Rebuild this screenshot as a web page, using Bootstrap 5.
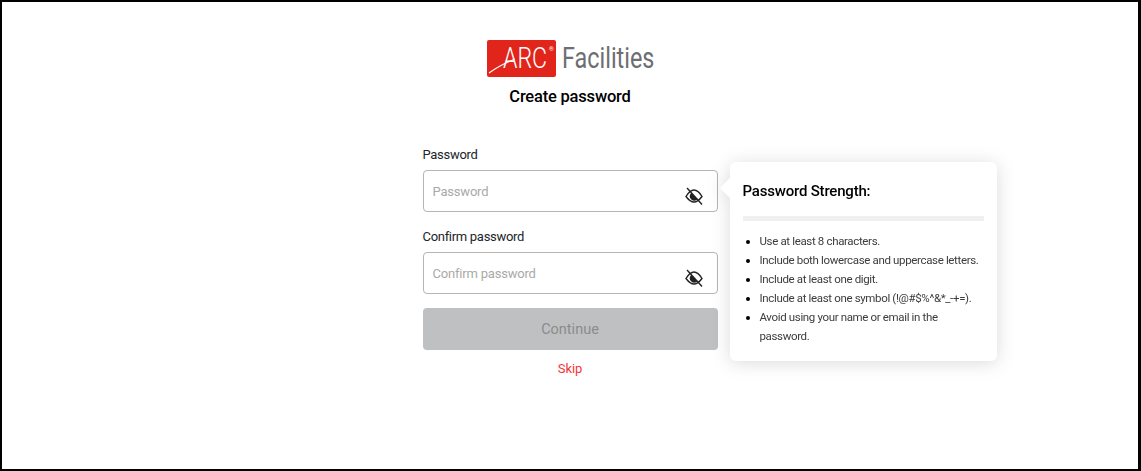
<!DOCTYPE html>
<html lang="en">
<head>
  <meta charset="UTF-8" />
  <meta name="viewport" content="width=device-width, initial-scale=1.0"/>
  <title>Create password</title>
  <link href="https://cdn.jsdelivr.net/npm/bootstrap@5.3.0/dist/css/bootstrap.min.css" rel="stylesheet">
  <style>
    html, body { height: 100%; }
    body { font-family: Roboto, "Liberation Sans", sans-serif; overflow: hidden; background: #fff; }
    .page-frame {
      height: 471px;
      border: solid #000;
      border-width: 2px 3px 2px 2px;
      padding-top: 38px;
    }
    .logo-svg { display: block; margin-left: 4px; }
    .page-title { font-size: 16.5px; font-weight: 500; line-height: 24px; letter-spacing: -.2px; margin: 8px 0 0; color: #000; }
    .form-col { width: 295px; margin-top: 36px; position: relative; }
    .field-label { font-size: 13px; line-height: 20px; letter-spacing: -.3px; color: #212529; margin-bottom: 5px; display: block; }
    .field-wrap { position: relative; margin-bottom: 15px; }
    .field-input {
      height: 42px;
      border: 1px solid #b5b5b5;
      border-radius: 4px;
      font-size: 13px;
      letter-spacing: -.2px;
      padding: 0 9px;
    }
    .field-input::placeholder { color: #a9a9a9; opacity: 1; }
    .eye-icon { position: absolute; right: 15px; top: 17px; }
    .btn-continue {
      height: 42px;
      border: 0;
      border-radius: 4px;
      font-size: 14.5px;
      margin-top: -1px;
      padding-top: 8px;
    }
    .btn-continue:disabled { background: #bfc0c1; color: #8b8c8d; opacity: 1; }
    .skip-link { display: block; text-align: center; color: #f2353a; font-size: 13px; letter-spacing: -.1px; line-height: 20px; margin-top: 9px; text-decoration: none; }
    .strength-pop {
      position: absolute;
      left: 307px;
      top: 17px;
      width: 267px;
      height: 199px;
      background: #fff;
      border-radius: 6px;
      filter: drop-shadow(0 2px 9px rgba(0,0,0,.14));
      padding: 19px 13px 0;
    }
    .strength-pop::before {
      content: "";
      position: absolute;
      left: -7px;
      top: 19px;
      width: 14px;
      height: 14px;
      background: #fff;
      transform: rotate(45deg);
    }
    .pop-title { font-size: 15px; font-weight: 500; line-height: 20px; letter-spacing: -.2px; color: #000; margin: 0; position: relative; }
    .pop-rule { height: 5px; background: #f0f0f0; margin: 15px 0 11px; }
    .rule-list { list-style: disc; margin: 0; padding-left: 17px; font-size: 11.5px; line-height: 19px; letter-spacing: -.35px; color: #3c3c3c; }
    .rule-list li::marker { color: #000; }
  </style>
</head>
<body>
  <div class="page-frame d-flex flex-column align-items-center">
    <svg class="logo-svg" width="170" height="37" viewBox="0 0 170 37">
      <rect width="69" height="37" rx="2" fill="#e1251b"/>
      <text transform="translate(16 28) scale(.77 1)" font-family="Roboto" font-weight="300" font-size="30" fill="#fff">ARC</text>
      <text x="62" y="11" font-family="Roboto" font-size="6" fill="#fff">®</text>
      <path d="M2 33C10 27 18 23 28 19" stroke="#fff" stroke-width="1.2" fill="none"/>
      <text transform="translate(75 28) scale(.78 1)" font-family="Roboto" font-size="30" fill="#6d6e71">Facilities</text>
    </svg>
    <h1 class="page-title">Create password</h1>
    <form class="form-col">
      <label class="field-label" for="pw">Password</label>
      <div class="field-wrap">
        <input id="pw" type="password" class="form-control field-input" placeholder="Password">
        <svg class="eye-icon" width="18" height="18" viewBox="0 0 18 18" fill="none" stroke="#222" stroke-width="1.4"><path d="M1 9.500C4 4.500 6.500 3 9 3S14 4.500 17 9.500C14 13.500 11.500 15 9 15S4 13.500 1 9.500Z"/><path d="M6.300 6.800A3.800 3.800 0 0 0 11.500 12.200Z" fill="#222"/><path d="M2 1L17 17.500"/></svg>
      </div>
      <label class="field-label" for="pw2">Confirm password</label>
      <div class="field-wrap">
        <input id="pw2" type="password" class="form-control field-input" placeholder="Confirm password">
        <svg class="eye-icon" width="18" height="18" viewBox="0 0 18 18" fill="none" stroke="#222" stroke-width="1.4"><path d="M1 9.500C4 4.500 6.500 3 9 3S14 4.500 17 9.500C14 13.500 11.500 15 9 15S4 13.500 1 9.500Z"/><path d="M6.300 6.800A3.800 3.800 0 0 0 11.500 12.200Z" fill="#222"/><path d="M2 1L17 17.500"/></svg>
      </div>
      <button type="button" class="btn btn-continue w-100" disabled>Continue</button>
      <a class="skip-link" href="#">Skip</a>
      <div class="strength-pop">
        <p class="pop-title">Password Strength:</p>
        <div class="pop-rule"></div>
        <ul class="rule-list">
          <li>Use at least 8 characters.</li>
          <li>Include both lowercase and uppercase letters.</li>
          <li>Include at least one digit.</li>
          <li>Include at least one symbol (!@#$%^&amp;*_-+=).</li>
          <li>Avoid using your name or email in the password.</li>
        </ul>
      </div>
    </form>
  </div>
  <script src="https://cdn.jsdelivr.net/npm/bootstrap@5.3.0/dist/js/bootstrap.bundle.min.js"></script>
</body>
</html>
